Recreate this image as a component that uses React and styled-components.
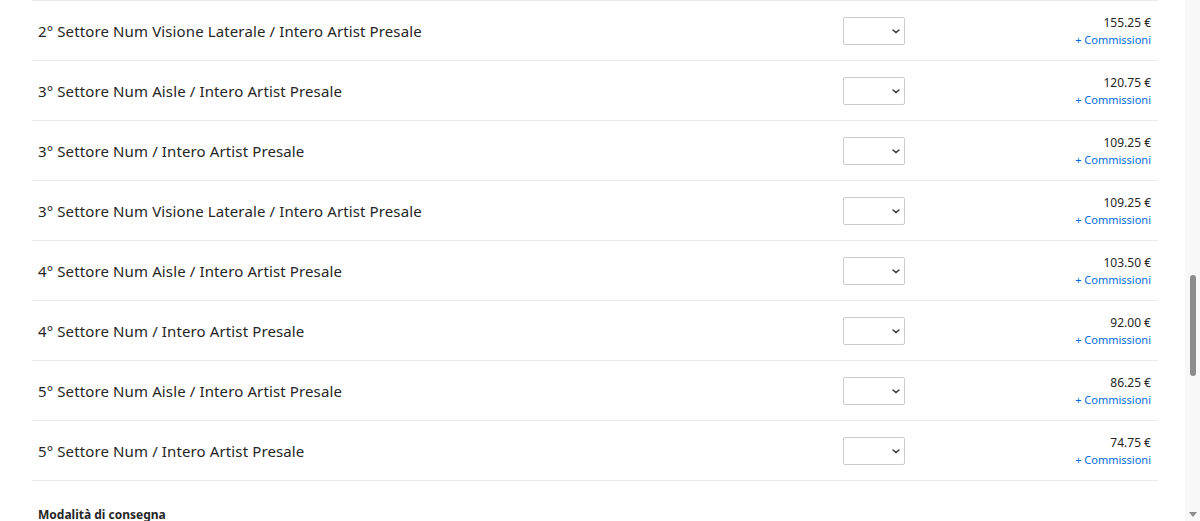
import React from 'react';
import styled, { createGlobalStyle } from 'styled-components';

const GlobalStyle = createGlobalStyle`
  html, body {
    margin: 0;
    padding: 0;
    background: #fff;
    overflow: hidden;
  }
  body {
    font-family: 'Noto Sans', 'Liberation Sans', sans-serif;
    color: #262626;
  }
`;

const tickets = [
  { name: '2° Settore Num Visione Laterale / Intero Artist Presale', price: '155.25 €' },
  { name: '3° Settore Num Aisle / Intero Artist Presale', price: '120.75 €' },
  { name: '3° Settore Num / Intero Artist Presale', price: '109.25 €' },
  { name: '3° Settore Num Visione Laterale / Intero Artist Presale', price: '109.25 €' },
  { name: '4° Settore Num Aisle / Intero Artist Presale', price: '103.50 €' },
  { name: '4° Settore Num / Intero Artist Presale', price: '92.00 €' },
  { name: '5° Settore Num Aisle / Intero Artist Presale', price: '86.25 €' },
  { name: '5° Settore Num / Intero Artist Presale', price: '74.75 €' },
];

const Chevron = () => (
  <SChevron width='8' height='5' viewBox='0 0 8 5' aria-hidden='true'>
    <path d='M1 1l3 2.6L7 1' fill='none' stroke='#333' strokeWidth='1.4' strokeLinecap='round' />
  </SChevron>
);

const App = () => (
  <>
    <GlobalStyle />
    <SPage>
      <SMain>
        <SList>
          {tickets.map((t) => (
            <SRow key={t.name + t.price}>
              <SName>{t.name}</SName>
              <SSelectWrap>
                <SSelect defaultValue=''>
                  <option value=''></option>
                  <option value='1'>1</option>
                  <option value='2'>2</option>
                </SSelect>
                <Chevron />
              </SSelectWrap>
              <SPriceCol>
                <SPrice>{t.price}</SPrice>
                <SFee href='#'>+ Commissioni</SFee>
              </SPriceCol>
            </SRow>
          ))}
        </SList>
        <SSectionTitle>Modalità di consegna</SSectionTitle>
      </SMain>
      <SScrollRail>
        <SThumb />
        <SArrow />
      </SScrollRail>
    </SPage>
  </>
);

export default App;

const SPage = styled.div`
  display: flex;
  width: 1200px;
  height: 521px;
  overflow: hidden;
`;

const SMain = styled.main`
  flex: 1;
  padding: 0 27px 0 32px;
`;

const SList = styled.div`
  border-bottom: 1px solid #ebebeb;
`;

const SRow = styled.div`
  display: grid;
  grid-template-columns: 1fr 62px 246px;
  align-items: center;
  height: 59px;
  padding: 0 7px 0 6px;
  border-top: 1px solid #ebebeb;
`;

const SName = styled.span`
  font-size: 15px;
  color: #262626;
  letter-spacing: 0.12px;
`;

const SSelectWrap = styled.div`
  position: relative;
  width: 62px;
  height: 28px;
  margin-top: 1px;
`;

const SSelect = styled.select`
  appearance: none;
  -webkit-appearance: none;
  display: block;
  width: 62px;
  height: 28px;
  border: 1px solid #cccccc;
  border-radius: 2px;
  background: #fff;
  font-size: 12px;
`;

const SChevron = styled.svg`
  position: absolute;
  right: 5px;
  top: 12px;
  pointer-events: none;
`;

const SPriceCol = styled.div`
  display: flex;
  flex-direction: column;
  align-items: flex-end;
  gap: 2px;
  margin-top: 0;
`;

const SPrice = styled.span`
  font-size: 12px;
  line-height: 15px;
  color: #262626;
`;

const SFee = styled.a`
  font-size: 11px;
  line-height: 15px;
  color: #026cdf;
  text-decoration: none;
`;

const SSectionTitle = styled.h3`
  margin: 26px 0 0 6px;
  font-size: 12px;
  line-height: 16px;
  font-weight: 700;
  color: #262626;
`;

const SScrollRail = styled.div`
  width: 15px;
  background: #f8f8f8;
  display: flex;
  flex-direction: column;
  align-items: center;
  padding-top: 275px;
  box-sizing: border-box;
`;

const SThumb = styled.div`
  width: 6px;
  height: 101px;
  border-radius: 3px;
  background: #8c8c8c;
`;

const SArrow = styled.div`
  margin-top: auto;
  margin-bottom: 4px;
  width: 0;
  height: 0;
  border-left: 4px solid transparent;
  border-right: 4px solid transparent;
  border-top: 5px solid #8c8c8c;
`;
